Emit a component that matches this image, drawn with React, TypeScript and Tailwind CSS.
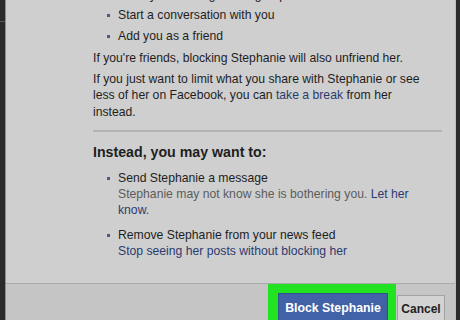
import React from "react";

const Bullet = () => (
  <span className="absolute left-[-11px] top-[7px] w-[3px] h-[3px] bg-[#4b5a7d]" />
);

const Item = ({ children, className = "" }: { children: React.ReactNode; className?: string }) => (
  <li className={`relative ${className}`}>
    <Bullet />
    {children}
  </li>
);

export default function App() {
  return (
    <div
      className="w-[460px] h-[320px] overflow-hidden flex bg-[#2a2a2a] text-[#1e1e1e]"
      style={{ fontFamily: '"Liberation Sans", Arial, sans-serif' }}
    >
      {/* background page peeking out on the left */}
      <div className="w-[5px] relative">
        <div className="absolute top-[21px] left-0 w-[5px] h-[1px] bg-[#555]" />
      </div>

      <div className="flex-1 flex flex-col bg-[#cfcfcf] border-l border-[#8d8d8d] border-r border-r-[#bcbcbc]">
        <div className="h-[283px] shrink-0 overflow-hidden pl-[87px] pr-[13px] text-[12.2px] leading-[16.5px]">
          <ul className="mt-[-13px] pl-[25px] flex flex-col gap-[3.8px]">
            <Item>Send you messages in a group</Item>
            <Item>Start a conversation with you</Item>
            <Item>Add you as a friend</Item>
          </ul>
          <p className="mt-[5.8px]">If you're friends, blocking Stephanie will also unfriend her.</p>
          <p className="mt-[4.5px]">
            If you just want to limit what you share with Stephanie or see less of her on Facebook, you can{" "}
            <span className="text-[#2b3b70]">take a break</span> from her
            <br />
            instead.
          </p>
          <div className="mt-[10px] h-[2px] bg-[#b3b3b3]" />
          <h2 className="mt-[11px] text-[14.2px] leading-[18px] font-bold">Instead, you may want to:</h2>
          <ul className="mt-[8.3px] pl-[25px] flex flex-col gap-[9px] leading-[16px]">
            <Item>
              Send Stephanie a message
              <div className="text-[#5c5c5c]">
                Stephanie may not know she is bothering you.{" "}
                <span className="text-[#2b3b70]">Let her know.</span>
              </div>
            </Item>
            <Item>
              Remove Stephanie from your news feed
              <div className="text-[#2b3b70]">Stop seeing her posts without blocking her</div>
            </Item>
          </ul>
        </div>

        <div className="flex-1 border-t border-[#a9a9a9] bg-[#c5c5c5] flex justify-end items-start pr-[10px]">
          <div className="bg-[#22e322] pl-[10px] pr-[8px] pt-[9px] h-[40px]">
            <button className="w-[110px] h-[30px] bg-[#4162a6] border border-[#34528f] text-white font-bold text-[12.3px] leading-[28px]">
              Block Stephanie
            </button>
          </div>
          <button className="ml-[1px] mt-[11px] w-[48px] h-[27px] bg-[#d3d3d3] border border-[#a3a3a3] font-bold text-[12px] text-[#222]">
            Cancel
          </button>
        </div>
      </div>

      <div className="w-[4px]" />
    </div>
  );
}
